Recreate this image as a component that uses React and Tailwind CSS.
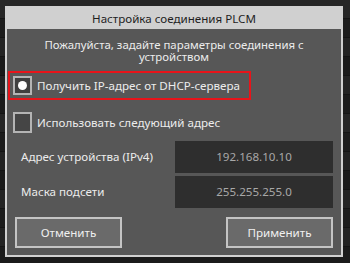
export default function App() {
  const rows = [
    "bg-[#262626]", "bg-[#1c1c1c]", "bg-[#242424]", "bg-[#1a1a1a]", "bg-[#232323]", "bg-[#1b1b1b]",
    "bg-[#252525]", "bg-[#1c1c1c]", "bg-[#232323]", "bg-[#1a1a1a]", "bg-[#242424]", "bg-[#1c1c1c]", "bg-[#232323]", "bg-[#1b1b1b]",
  ];
  return (
    <div className="relative w-[350px] h-[263px] overflow-hidden bg-[#1c1c1c] text-[11.6px] leading-[14px]" style={{ fontFamily: '"Noto Sans", "DejaVu Sans", sans-serif' }}>
      <div className="flex flex-col">
        {rows.map((c, i) => (
          <div key={i} className={`h-[19px] border-b border-[#141414] ${c}`} />
        ))}
      </div>
      <div className="absolute left-[5px] top-[6px] w-[338px] h-[251px] border-2 border-[#d0d0d0] bg-[#575757] flex flex-col">
        <div className="h-[21px] bg-[#d0d0d0] text-[#1e1e1e] flex items-center justify-center">Настройка соединения PLCM</div>
        <div className="pt-[10px] text-center text-[#ececec] text-[11.4px] leading-[12px]">
          <div className="h-[12px]">Пожалуйста, задайте параметры соединения с</div>
          <div className="h-[12px]">устройством</div>
        </div>
        <div className="mt-[8px] ml-[1px] w-[243px] h-[29px] border-2 border-[#e8141a] flex items-center pl-[3px] gap-[5px] text-[#ececec]">
          <div className="w-[19px] h-[19px] border-2 border-[#b4b4b4] bg-[#3f3f3f] flex items-center justify-center">
            <div className="w-[9px] h-[9px] rounded-full bg-white" />
          </div>
          <span>Получить IP-адрес от DHCP-сервера</span>
        </div>
        <div className="mt-[12px] h-[21px] flex items-center pl-[6px] gap-[5px] text-[#ececec]">
          <div className="w-[19px] h-[21px] border-2 border-[#b4b4b4] bg-[#454545]" />
          <span>Использовать следующий адрес</span>
        </div>
        <div className="mt-[8px] h-[32px] flex items-center">
          <span className="pl-[14px] flex-1 text-[#ececec]">Адрес устройства (IPv4)</span>
          <div className="w-[158px] h-[32px] mr-[8px] bg-[#2e2e2e] text-[#a8a8a8] flex items-center justify-center">192.168.10.10</div>
        </div>
        <div className="mt-[3px] h-[32px] flex items-center">
          <span className="pl-[14px] flex-1 text-[#ececec]">Маска подсети</span>
          <div className="w-[158px] h-[32px] mr-[8px] bg-[#2e2e2e] text-[#a8a8a8] flex items-center justify-center">255.255.255.0</div>
        </div>
        <div className="mt-[9px] px-[8px] flex justify-between">
          <button className="w-[107px] h-[31px] border-2 border-[#c4c4c4] bg-[#6a6a6a] text-[#f0f0f0]">Отменить</button>
          <button className="w-[107px] h-[31px] border-2 border-[#c4c4c4] bg-[#6a6a6a] text-[#f0f0f0]">Применить</button>
        </div>
      </div>
    </div>
  );
}
